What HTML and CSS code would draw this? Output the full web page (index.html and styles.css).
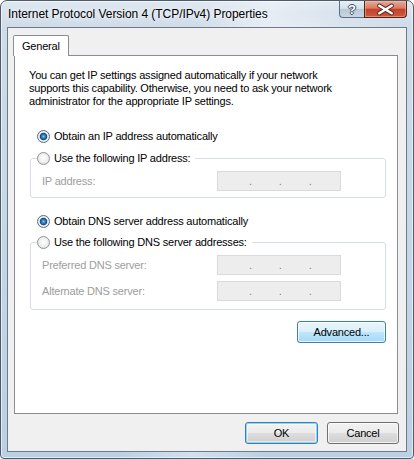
FILE: index.html
```html
<!DOCTYPE html>
<html lang="en">
<head>
<meta charset="utf-8">
<title>Internet Protocol Version 4 (TCP/IPv4) Properties</title>
<link rel="stylesheet" href="styles.css">
</head>
<body>
<div class="window">
  <div class="titlebar">
    <span class="title">Internet Protocol Version 4 (TCP/IPv4) Properties</span>
    <div class="caption">
      <span class="cbtn help">?</span>
      <span class="cbtn close">
        <svg width="43" height="17" viewBox="0 0 43 17">
          <path d="M15 4.5 L28 12.5 M28 4.5 L15 12.5" stroke="#5b2a20" stroke-width="4.6" stroke-linecap="round"/>
          <path d="M15 4.5 L28 12.5 M28 4.5 L15 12.5" stroke="#ffffff" stroke-width="2.6" stroke-linecap="round"/>
        </svg>
      </span>
    </div>
  </div>
  <div class="client">
    <div class="tabs"><span class="tab">General</span></div>
    <div class="panel">
      <p class="intro">You can get IP settings assigned automatically if your network supports this capability. Otherwise, you need to ask your network administrator for the appropriate IP settings.</p>

      <div class="opt opt-first"><span class="radio checked"></span><span>Obtain an IP address automatically</span></div>
      <fieldset class="group group-ip">
        <legend><span class="opt-leg"><span class="radio"></span><span>Use the following IP address:</span></span></legend>
        <div class="field"><span class="field-label">IP address:</span><span class="ipbox"><span class="oct"></span>.<span class="oct"></span>.<span class="oct"></span>.<span class="oct"></span></span></div>
      </fieldset>

      <div class="opt opt-dns"><span class="radio checked"></span><span>Obtain DNS server address automatically</span></div>
      <fieldset class="group group-dns">
        <legend><span class="opt-leg"><span class="radio"></span><span>Use the following DNS server addresses:</span></span></legend>
        <div class="field"><span class="field-label">Preferred DNS server:</span><span class="ipbox"><span class="oct"></span>.<span class="oct"></span>.<span class="oct"></span>.<span class="oct"></span></span></div>
        <div class="field field-next"><span class="field-label">Alternate DNS server:</span><span class="ipbox"><span class="oct"></span>.<span class="oct"></span>.<span class="oct"></span>.<span class="oct"></span></span></div>
      </fieldset>

      <div class="adv-row"><button class="btn btn-hot btn-adv">Advanced...</button></div>
    </div>
    <div class="footer">
      <button class="btn btn-default btn-ok">OK</button>
      <button class="btn btn-cancel">Cancel</button>
    </div>
  </div>
</div>
</body>
</html>
```
FILE: styles.css
```css
html, body {
  margin: 0;
  padding: 0;
  background: #ffffff;
}

body {
  font-family: "Liberation Sans", Arial, sans-serif;
  font-size: 11px;
  letter-spacing: -0.2px;
  color: #000;
}

.window {
  box-sizing: border-box;
  width: 414px;
  height: 459px;
  border: 1px solid #4d5b6a;
  border-radius: 7px 7px 4px 4px;
  background:
    radial-gradient(ellipse 120px 30px at 300px 40px, rgba(255,255,255,0.55), rgba(255,255,255,0) 100%),
    linear-gradient(100deg, rgba(255,255,255,0) 40%, rgba(255,255,255,0.35) 55%, rgba(255,255,255,0) 70%),
    linear-gradient(180deg, #dfe8f1 0px, #cfdce9 26px, #c3d5e6 60%, #bcd0e3 100%);
  box-shadow: inset 0 0 0 1px rgba(255,255,255,0.55);
  display: flex;
  flex-direction: column;
  overflow: hidden;
}

.titlebar {
  flex: none;
  height: 26px;
  display: flex;
  align-items: flex-start;
  padding: 0 6px 0 7px;
}

.title {
  flex: 1;
  margin-top: 6px;
  font-size: 12px;
  line-height: 14px;
  letter-spacing: -0.05px;
  color: #000;
  text-shadow: 0 0 4px rgba(255,255,255,0.9), 0 0 8px rgba(255,255,255,0.7);
  white-space: nowrap;
}

.caption {
  display: flex;
}

.cbtn {
  box-sizing: border-box;
  height: 17px;
  display: flex;
  align-items: center;
  justify-content: center;
  border: 1px solid #5d6f82;
  border-top: 0;
}

.help {
  width: 25px;
  border-right: 0;
  border-radius: 0 0 0 4px;
  background: linear-gradient(180deg, #e9f0f6 0%, #d3dfea 48%, #b7c8d9 52%, #c9d7e4 100%);
  color: #ffffff;
  font-size: 13px;
  font-weight: bold;
  letter-spacing: 0;
  text-shadow: 1px 0 #3b4d60, -1px 0 #3b4d60, 0 1px #3b4d60, 0 -1px #3b4d60;
  line-height: 15px;
}

.close {
  width: 43px;
  border-color: #5a2018;
  border-radius: 0 0 4px 0;
  background: linear-gradient(180deg, #e9a996 0%, #d97a62 45%, #c2412b 52%, #cf5a40 100%);
  box-shadow: inset 0 0 0 1px rgba(255,200,180,0.45);
}

.close svg {
  display: block;
}

.client {
  flex: 1;
  margin: 0 6px 6px;
  border: 1px solid #6d7a88;
  background: #f0f0f0;
  display: flex;
  flex-direction: column;
  min-height: 0;
}

.tabs {
  flex: none;
  display: flex;
  padding: 7px 0 0 5px;
}

.tab {
  position: relative;
  z-index: 1;
  height: 20px;
  line-height: 20px;
  padding: 0 8px;
  border: 1px solid #898c95;
  border-bottom: 0;
  border-radius: 2px 2px 0 0;
  background: #ffffff;
  margin-bottom: -1px;
}

.panel {
  flex: 1;
  margin: 0 8px 0 6px;
  border: 1px solid #898c95;
  background: #ffffff;
  padding: 13px 11px 0 14px;
  min-height: 0;
}

.intro {
  margin: 0;
  width: 310px;
  line-height: 13px;
}

.opt,
.opt-leg {
  display: flex;
  align-items: center;
  gap: 4px;
  height: 16px;
  white-space: nowrap;
}

.opt {
  margin-left: 8px;
}

.opt-first {
  margin-top: 20px;
}

.opt-dns {
  margin-top: 15px;
}

.radio {
  flex: none;
  box-sizing: border-box;
  width: 13px;
  height: 13px;
  border-radius: 50%;
  border: 1px solid #8e9396;
  background: radial-gradient(circle at 50% 45%, #ffffff 0%, #f1f1f1 45%, #d6d8da 100%);
}

.radio.checked {
  border-color: #5c6d7c;
  background: radial-gradient(circle at 50% 50%, #7cc4ee 0px, #2a78b8 2px, #11497e 3.3px, #e9eef2 4.2px, #f5f5f5 4.8px, #d3d6d9 6px);
}

.group {
  margin: 6px 0 0 1px;
  padding: 0 0 6px 0;
  border: 1px solid #d5dfe5;
  border-radius: 3px;
  min-width: 0;
}

.group-dns {
  margin-top: 5px;
  padding-bottom: 8px;
}

.group legend {
  margin-left: 6px;
  padding: 0 5px 0 0;
}

.field {
  display: flex;
  align-items: center;
  margin-top: 5px;
  padding-left: 11px;
}

.field-next {
  margin-top: 6px;
}

.field-label {
  width: 175px;
  flex: none;
  color: #9d9d9d;
}

.ipbox {
  box-sizing: border-box;
  width: 124px;
  height: 20px;
  display: flex;
  align-items: flex-end;
  padding: 0 0 3px 4px;
  border: 1px solid #d9dadb;
  background: #ededed;
  color: #6f878e;
  line-height: 11px;
  font-size: 11px;
}

.oct {
  display: inline-block;
  width: 27px;
}

.adv-row {
  display: flex;
  justify-content: flex-end;
  margin-top: 11px;
}

.btn {
  box-sizing: border-box;
  height: 22px;
  padding: 0;
  font-family: "Liberation Sans", Arial, sans-serif;
  font-size: 11px;
  letter-spacing: -0.2px;
  color: #000;
  border: 1px solid #707070;
  border-radius: 3px;
  background: linear-gradient(180deg, #f2f2f2 0%, #ebebeb 49%, #dddddd 51%, #cfcfcf 100%);
  box-shadow: inset 0 0 0 1px rgba(255,255,255,0.75);
}

.btn-hot {
  border-color: #3c7fb1;
  background: linear-gradient(180deg, #eaf6fd 0%, #d9f0fc 49%, #bee6fd 51%, #a7d9f5 100%);
}

.btn-default {
  border-color: #3c7fb1;
  box-shadow: inset 0 0 0 1px #8ed6f5, inset 0 0 0 2px rgba(255,255,255,0.5);
}

.btn-adv {
  width: 89px;
}

.footer {
  flex: none;
  display: flex;
  justify-content: flex-end;
  gap: 9px;
  padding: 8px 7px 7px;
}

.btn-ok {
  width: 73px;
}

.btn-cancel {
  width: 72px;
}
```
